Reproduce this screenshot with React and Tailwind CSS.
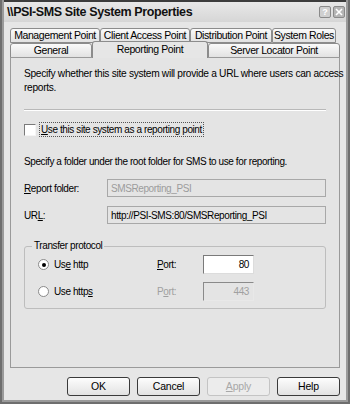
import React from "react";

const F = { fontFamily: '"Liberation Sans", Arial, sans-serif' };

function Tab({ children, w, selected }) {
  return (
    <div
      className={
        "flex items-center justify-center border border-[#8c8c8c] rounded-t-[3px] text-[10.5px] tracking-[-0.4px] text-black whitespace-nowrap " +
        (selected
          ? "bg-[#e6e6e6] border-b-0 h-[17px] -mt-[2px] relative z-10"
          : "bg-gradient-to-b from-[#fafafa] to-[#e2e2e2] h-[15px]")
      }
      style={{ width: w }}
    >
      {children}
    </div>
  );
}

function Btn({ children, disabled }) {
  return (
    <div
      className={
        "w-[63px] h-[19px] flex items-center justify-center rounded-[3px] border text-[10.5px] tracking-[-0.2px] " +
        (disabled
          ? "border-[#c4c4c4] text-[#a8a8a8] bg-[#ececec]"
          : "border-[#3a3a3a] text-black bg-gradient-to-b from-[#fdfdfd] to-[#e2e2e2]")
      }
    >
      {children}
    </div>
  );
}

export default function App() {
  return (
    <div style={F} className="w-[350px] h-[404px] bg-[#6e6e6e] p-[2px] pt-0 overflow-hidden">
      <div className="w-full h-full flex flex-col bg-[#e6e6e6] border-x-[2px] border-b-[2px] border-[#9a9a9a]">
        {/* title bar */}
        <div className="h-[22px] flex items-center justify-between bg-gradient-to-b from-[#e8e8e8] to-[#d6d6d6] border-t-[2px] border-[#3c3c3c] pl-[3px] pr-[1px]">
          <span className="text-[12.5px] font-bold text-[#111] tracking-[-0.4px]">\\PSI-SMS Site System Properties</span>
          <div className="flex gap-[2px]">
            <div className="w-[12px] h-[12px] border border-[#8a8a8a] rounded-[2px] bg-[#cfcfcf] text-[9px] font-bold text-white flex items-center justify-center leading-none">?</div>
            <div className="w-[12px] h-[12px] border border-[#8a8a8a] rounded-[2px] bg-[#b5b5b5] flex items-center justify-center">
              <svg width="8" height="8" viewBox="0 0 8 8"><path d="M1 1L7 7M7 1L1 7" stroke="#fff" strokeWidth="1.6" /></svg>
            </div>
          </div>
        </div>
        {/* tabs */}
        <div className="pl-[6px] pt-[6px] flex flex-col">
          <div className="flex">
            <Tab w={90}>Management Point</Tab>
            <Tab w={90}>Client Access Point</Tab>
            <Tab w={82}>Distribution Point</Tab>
            <Tab w={64}>System Roles</Tab>
          </div>
          <div className="flex">
            <Tab w={82}>General</Tab>
            <Tab w={116} selected>Reporting Point</Tab>
            <Tab w={132}>Server Locator Point</Tab>
          </div>
        </div>
        {/* panel */}
        <div className="mx-[6px] -mt-[1px] h-[311px] border border-[#9a9a9a] bg-[#e4e4e4] pl-[13px] pr-[11px] pt-[9px] text-[10px] tracking-[-0.4px] text-black flex flex-col">
          <p className="leading-[14px] whitespace-nowrap text-[10.2px] tracking-[-0.3px]">Specify whether this site system will provide a URL where users can access<br />reports.</p>
          <div className="h-[1px] bg-[#b8b8b8] border-b border-white mt-[14px] mr-[2px] box-content" />
          <div className="flex items-center mt-[11px] gap-[3px]">
            <div className="w-[12px] h-[12px] bg-white border border-t-[#7a7a7a] border-l-[#7a7a7a] border-r-[#f5f5f5] border-b-[#f5f5f5]" />
            <span className="border border-dotted border-[#555] px-[1px] leading-[13px]"><u>U</u>se this site system as a reporting point</span>
          </div>
          <p className="mt-[18px] leading-[14px]">Specify a folder under the root folder for SMS to use for reporting.</p>
          <div className="flex items-center mt-[10px] mr-[2px]">
            <span className="w-[83px]"><u>R</u>eport folder:</span>
            <div className="flex-1 h-[18px] border border-[#a8a8a8] bg-[#e4e4e4] text-[#9c9c9c] flex items-center pl-[3px]">SMSReporting_PSI</div>
          </div>
          <div className="flex items-center mt-[9px] mr-[2px]">
            <span className="w-[83px]">UR<u>L</u>:</span>
            <div className="flex-1 h-[18px] border border-[#a8a8a8] bg-[#e4e4e4] text-black flex items-center pl-[3px]">http://PSI-SMS:80/SMSReporting_PSI</div>
          </div>
          <div className="relative mt-[22px] mr-[2px] h-[63px] border border-[#bdbdbd] rounded-[3px]">
            <span className="absolute -top-[8px] left-[7px] bg-[#e4e4e4] px-[2px] leading-[14px]">Transfer protocol</span>
            <div className="flex items-center mt-[8px] h-[19px]">
              <div className="ml-[13px] w-[11px] h-[11px] rounded-full bg-white border border-[#8a8a8a] flex items-center justify-center">
                <div className="w-[4px] h-[4px] rounded-full bg-black" />
              </div>
              <span className="ml-[5px] w-[103px]">Us<u>e</u> http</span>
              <span className="w-[46px]"><u>P</u>ort:</span>
              <div className="w-[51px] h-[19px] bg-white border border-t-[#7a7a7a] border-l-[#7a7a7a] border-r-[#dcdcdc] border-b-[#dcdcdc] flex items-center justify-end pr-[4px]">80</div>
            </div>
            <div className="flex items-center mt-[8px] h-[19px]">
              <div className="ml-[13px] w-[11px] h-[11px] rounded-full bg-white border border-[#8a8a8a]" />
              <span className="ml-[5px] w-[103px]">Use http<u>s</u></span>
              <span className="w-[46px] text-[#a0a0a0]">P<u>o</u>rt:</span>
              <div className="w-[51px] h-[19px] bg-[#e4e4e4] border border-t-[#8a8a8a] border-l-[#8a8a8a] border-r-[#e8e8e8] border-b-[#e8e8e8] text-[#a0a0a0] flex items-center justify-end pr-[4px]">443</div>
            </div>
          </div>
        </div>
        {/* buttons */}
        <div className="flex justify-end gap-[7px] pr-[6px] mt-[9px]">
          <Btn>OK</Btn>
          <Btn>Cancel</Btn>
          <Btn disabled><u>A</u>pply</Btn>
          <Btn>Help</Btn>
        </div>
      </div>
    </div>
  );
}
